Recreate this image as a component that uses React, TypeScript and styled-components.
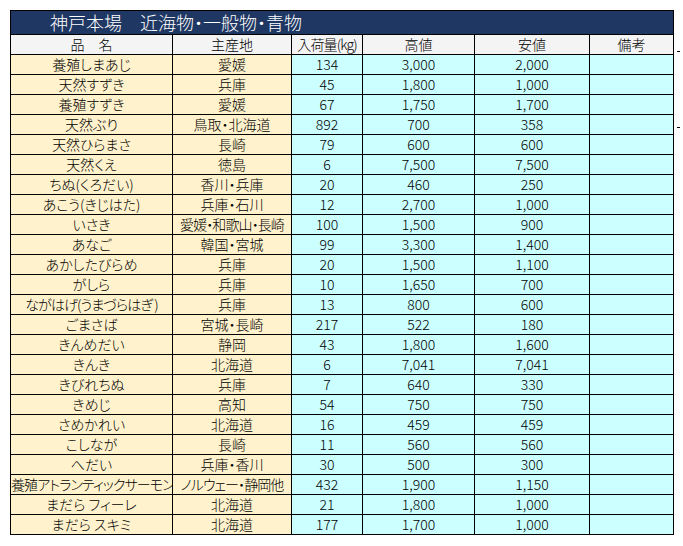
import React from "react";
import styled, { createGlobalStyle } from "styled-components";

const GlobalStyle = createGlobalStyle`
  html, body { margin: 0; padding: 0; background: #ffffff; }
  body {
    font-family: "Noto Sans CJK JP", "Noto Sans", sans-serif;
    color: #000;
  }
`;

const Page = styled.div`
  display: flex;
  align-items: flex-start;
  gap: 3px;
  padding: 10px 0 0 10px;
`;

const Sheet = styled.table`
  border-collapse: collapse;
  table-layout: fixed;
  width: 663px;
  border: 1px solid #000;
  font-family: "Noto Sans CJK JP", sans-serif;
  font-feature-settings: "palt" 1;
`;

const TitleCell = styled.td`
  height: 22px;
  padding: 0 0 1px 39px;
  background: #1f3763;
  color: #ffffff;
  font-size: 18px;
  font-weight: 300;
  line-height: 21px;
  text-align: left;
  white-space: nowrap;
  border: 1px solid #000;
`;

type Tone = "head" | "tan" | "cyan";

const toneColor: Record<Tone, string> = {
  head: "#f4f4f4",
  tan: "#fff2cc",
  cyan: "#ccffff",
};

const Cell = styled.td<{ $tone: Tone; $tight?: boolean }>`
  height: 19px;
  padding: 0;
  background: ${(p) => toneColor[p.$tone]};
  border: 1px solid #000;
  font-size: 14px;
  font-weight: 300;
  line-height: 19px;
  text-align: center;
  white-space: nowrap;
  overflow: hidden;
  letter-spacing: ${(p) => (p.$tight ? "-0.9px" : "0")};
`;

const Side = styled.div`
  display: flex;
  flex-direction: column;
  padding-top: 41px;
  gap: 75px;
`;

const Tick = styled.span`
  display: block;
  width: 3px;
  height: 1px;
  background: #000;
`;

type Row = [string, string, string, string, string];

const rows: Row[] = [
  ["養殖しまあじ", "愛媛", "134", "3,000", "2,000"],
  ["天然すずき", "兵庫", "45", "1,800", "1,000"],
  ["養殖すずき", "愛媛", "67", "1,750", "1,700"],
  ["天然ぶり", "鳥取・北海道", "892", "700", "358"],
  ["天然ひらまさ", "長崎", "79", "600", "600"],
  ["天然くえ", "徳島", "6", "7,500", "7,500"],
  ["ちぬ(くろだい)", "香川・兵庫", "20", "460", "250"],
  ["あこう(きじはた)", "兵庫・石川", "12", "2,700", "1,000"],
  ["いさき", "愛媛・和歌山・長崎", "100", "1,500", "900"],
  ["あなご", "韓国・宮城", "99", "3,300", "1,400"],
  ["あかしたびらめ", "兵庫", "20", "1,500", "1,100"],
  ["がしら", "兵庫", "10", "1,650", "700"],
  ["ながはげ(うまづらはぎ )", "兵庫", "13", "800", "600"],
  ["ごまさば", "宮城・長崎", "217", "522", "180"],
  ["きんめだい", "静岡", "43", "1,800", "1,600"],
  ["きんき", "北海道", "6", "7,041", "7,041"],
  ["きびれちぬ", "兵庫", "7", "640", "330"],
  ["きめじ", "高知", "54", "750", "750"],
  ["さめかれい", "北海道", "16", "459", "459"],
  ["こしなが", "長崎", "11", "560", "560"],
  ["へだい", "兵庫・香川", "30", "500", "300"],
  ["養殖アトランティックサーモン", "ノルウェー・静岡他", "432", "1,900", "1,150"],
  ["まだら フィーレ", "北海道", "21", "1,800", "1,000"],
  ["まだら スキミ", "北海道", "177", "1,700", "1,000"],
];

const widths = [162, 119, 71, 112, 115, 84];
const headers = ["品　名", "主産地", "入荷量(kg)", "高値", "安値", "備考"];

export default function App() {
  return (
    <>
      <GlobalStyle />
      <Page>
        <Sheet>
          <colgroup>
            {widths.map((w, i) => (
              <col key={i} style={{ width: w }} />
            ))}
          </colgroup>
          <tbody>
            <tr>
              <TitleCell colSpan={6}>神戸本場　近海物・一般物・青物</TitleCell>
            </tr>
            <tr>
              {headers.map((h) => (
                <Cell key={h} $tone="head" $tight={h.includes("kg")}>
                  {h}
                </Cell>
              ))}
            </tr>
            {rows.map((r) => (
              <tr key={r[0]}>
                <Cell $tone="tan" $tight={r[0].length > 12}>
                  {r[0]}
                </Cell>
                <Cell $tone="tan" $tight={r[1].length > 7}>
                  {r[1]}
                </Cell>
                <Cell $tone="cyan">{r[2]}</Cell>
                <Cell $tone="cyan">{r[3]}</Cell>
                <Cell $tone="cyan">{r[4]}</Cell>
                <Cell $tone="cyan"></Cell>
              </tr>
            ))}
          </tbody>
        </Sheet>
        <Side>
          <Tick />
          <Tick />
        </Side>
      </Page>
    </>
  );
}
